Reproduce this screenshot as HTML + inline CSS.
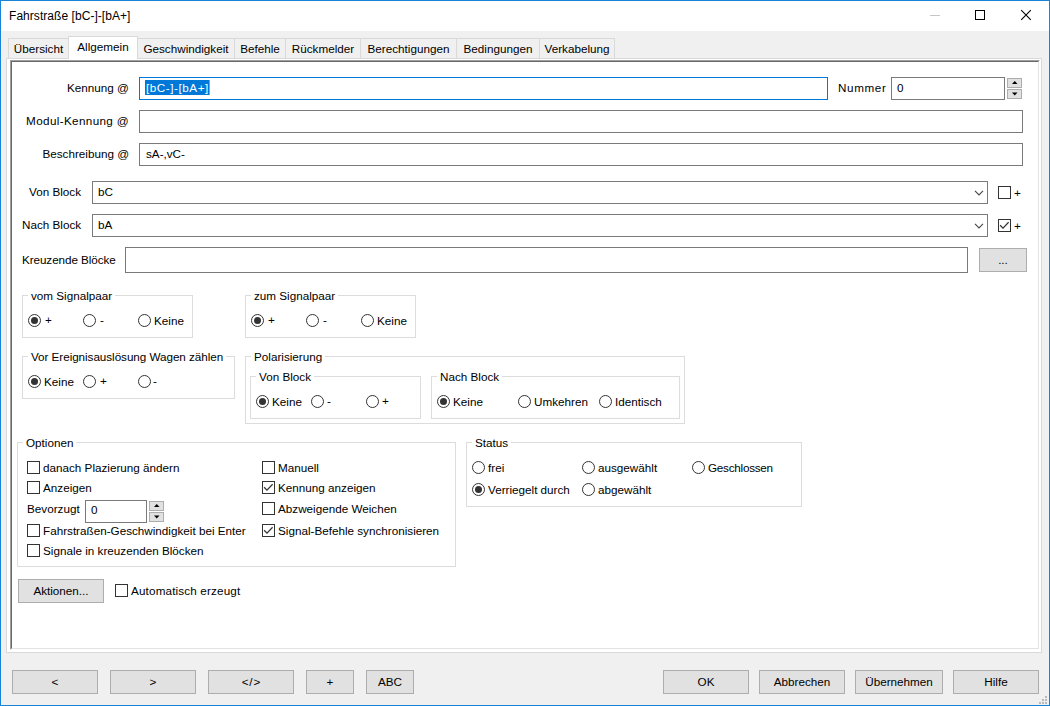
<!DOCTYPE html>
<html><head><meta charset="utf-8">
<style>
*{margin:0;padding:0;box-sizing:border-box}
html,body{width:1050px;height:706px;overflow:hidden;background:#f0f0f0}
body{position:relative;font-family:"Liberation Sans",sans-serif;font-size:11.7px;color:#000}
.a{position:absolute}
.t{position:absolute;line-height:14px;white-space:pre;height:14px}
.win{position:absolute;left:0;top:0;width:1050px;height:706px;border:1px solid #1883d7}
.title{position:absolute;left:1px;top:1px;width:1048px;height:30px;background:#fff}
.tab{position:absolute;top:38px;height:21px;border:1px solid #d9d9d9;border-bottom:none;background:#f0f0f0}
.tab.sel{top:36px;height:23px;background:#fff;z-index:2}
.page{position:absolute;left:6px;top:58px;width:1036px;height:595px;border:1px solid #d9d9d9;background:#fff}
.sunk{position:absolute;left:10px;top:60px;width:1030px;height:590px;border-top:1px solid #a0a0a0;border-left:1px solid #a0a0a0;border-right:1px solid #fff;border-bottom:1px solid #fff}
.sunk2{position:absolute;left:0;top:0;right:0;bottom:0;border-top:1px solid #696969;border-left:1px solid #696969;border-right:1px solid #e3e3e3;border-bottom:1px solid #e3e3e3}
.ed{position:absolute;border:1px solid #7a7a7a;background:#fff}
.btn{position:absolute;border:1px solid #adadad;background:#e1e1e1}
.grp{position:absolute;border:1px solid #dcdcdc}
.gl{position:absolute;background:#fff;line-height:14px;white-space:pre;padding:0 3px 0 3px}
.cb{position:absolute;width:13px;height:13px;border:1px solid #333;background:#fff}
.rb{position:absolute;width:13px;height:13px;border:1px solid #333;border-radius:50%;background:#fff}
.rb.on::after{content:"";position:absolute;left:2px;top:2px;width:7px;height:7px;border-radius:50%;background:#333}
.spin{position:absolute;border:1px solid #adadad;background:#e1e1e1}
</style></head><body>
<div class="win"></div><div class="title"></div>
<div class="t" style="left:9px;top:9px;font-size:12px;letter-spacing:0.05px">Fahrstraße [bC-]-[bA+]</div>
<div class="a" style="left:930px;top:15px;width:10px;height:1px;background:#c6c6c6"></div>
<div class="a" style="left:975px;top:10px;width:10px;height:10px;border:1px solid #000"></div>
<svg class="a" style="left:1020px;top:9px" width="12" height="12" viewBox="0 0 12 12"><path d="M1.2 1.2L10.8 10.8M10.8 1.2L1.2 10.8" stroke="#000" stroke-width="1.1" fill="none"/></svg>
<div class="tab" style="left:8px;width:61px"><div class="t" style="left:0;right:0;top:3px;text-align:center">Übersicht</div></div>
<div class="tab sel" style="left:68px;width:70px"><div class="t" style="left:0;right:0;top:3px;text-align:center">Allgemein</div></div>
<div class="tab" style="left:137px;width:98px"><div class="t" style="left:0;right:0;top:3px;text-align:center">Geschwindigkeit</div></div>
<div class="tab" style="left:234px;width:52px"><div class="t" style="left:0;right:0;top:3px;text-align:center">Befehle</div></div>
<div class="tab" style="left:285px;width:76px"><div class="t" style="left:0;right:0;top:3px;text-align:center">Rückmelder</div></div>
<div class="tab" style="left:360px;width:97px"><div class="t" style="left:0;right:0;top:3px;text-align:center">Berechtigungen</div></div>
<div class="tab" style="left:456px;width:84px"><div class="t" style="left:0;right:0;top:3px;text-align:center">Bedingungen</div></div>
<div class="tab" style="left:539px;width:76px"><div class="t" style="left:0;right:0;top:3px;text-align:center">Verkabelung</div></div>
<div class="page"></div><div class="sunk"><div class="sunk2"></div></div>
<div class="t" style="right:921px;top:81px;">Kennung @</div>
<div class="ed" style="left:139px;top:77px;width:689px;height:23px;border-color:#0078d7"></div>
<div class="a" style="left:145px;top:80px;width:64px;height:15px;background:#0078d7"></div>
<div class="t" style="left:146px;top:81px;color:#fff;letter-spacing:0.55px">[bC-]-[bA+]</div>
<div class="a" style="left:209px;top:80px;width:1px;height:15px;background:#ff8728"></div>
<div class="t" style="left:838px;top:81px;letter-spacing:0.6px">Nummer</div>
<div class="ed" style="left:891px;top:77px;width:114px;height:23px;"></div>
<div class="t" style="left:897px;top:81px;">0</div>
<div class="spin" style="left:1007px;top:78px;width:15px;height:10px"><svg class="a" style="left:4px;top:2px" width="6" height="4"><path d="M0 3.1L2.75 0.1L5.5 3.1Z" fill="#000"/></svg></div>
<div class="spin" style="left:1007px;top:89px;width:15px;height:10px"><svg class="a" style="left:4px;top:2px" width="6" height="4"><path d="M0 0.5L2.75 3.5L5.5 0.5Z" fill="#000"/></svg></div>
<div class="t" style="right:921px;top:114px;letter-spacing:0.35px">Modul-Kennung @</div>
<div class="ed" style="left:139px;top:110px;width:884px;height:23px;"></div>
<div class="t" style="right:921px;top:147px;">Beschreibung @</div>
<div class="ed" style="left:139px;top:143px;width:884px;height:23px;"></div>
<div class="t" style="left:146px;top:147px;">sA-,vC-</div>
<div class="t" style="left:29px;top:185px;">Von Block</div>
<div class="ed" style="left:92px;top:181px;width:896px;height:23px;"></div>
<div class="t" style="left:98px;top:185px;">bC</div>
<div class="t" style="left:22px;top:218px;">Nach Block</div>
<div class="ed" style="left:92px;top:214px;width:896px;height:23px;"></div>
<div class="t" style="left:98px;top:218px;">bA</div>
<svg class="a" style="left:974px;top:190px" width="10" height="6" viewBox="0 0 10 6"><path d="M1 0.9L5 4.9L9 0.9" stroke="#444" stroke-width="1.1" fill="none"/></svg>
<svg class="a" style="left:974px;top:223px" width="10" height="6" viewBox="0 0 10 6"><path d="M1 0.9L5 4.9L9 0.9" stroke="#444" stroke-width="1.1" fill="none"/></svg>
<div class="cb" style="left:998px;top:186px"></div>
<div class="t" style="left:1014px;top:186px;">+</div>
<div class="cb" style="left:998px;top:219px"><svg class="a" style="left:0;top:0" width="11" height="11" viewBox="0 0 11 11"><path d="M1.1 5.2L4 8.1L9.6 2.3" stroke="#333" stroke-width="1.25" fill="none"/></svg></div>
<div class="t" style="left:1014px;top:219px;">+</div>
<div class="t" style="left:22px;top:253px;letter-spacing:-0.08px">Kreuzende Blöcke</div>
<div class="ed" style="left:125px;top:247px;width:843px;height:26px;"></div>
<div class="btn" style="left:979px;top:248px;width:48px;height:24px;"></div>
<div class="t" style="left:979px;width:48px;text-align:center;top:253px;">...</div>
<div class="grp" style="left:22px;top:295px;width:171px;height:43px;"></div>
<div class="gl" style="left:28px;top:289px">vom Signalpaar</div>
<div class="rb on" style="left:28px;top:314px"></div>
<div class="t" style="left:45px;top:313px;">+</div>
<div class="rb" style="left:83px;top:314px"></div>
<div class="t" style="left:100px;top:313px;">-</div>
<div class="rb" style="left:138px;top:314px"></div>
<div class="t" style="left:154px;top:314px;">Keine</div>
<div class="grp" style="left:245px;top:295px;width:171px;height:43px;"></div>
<div class="gl" style="left:251px;top:289px">zum Signalpaar</div>
<div class="rb on" style="left:251px;top:314px"></div>
<div class="t" style="left:268px;top:313px;">+</div>
<div class="rb" style="left:306px;top:314px"></div>
<div class="t" style="left:323px;top:313px;">-</div>
<div class="rb" style="left:361px;top:314px"></div>
<div class="t" style="left:377px;top:314px;">Keine</div>
<div class="grp" style="left:22px;top:356px;width:213px;height:43px;"></div>
<div class="gl" style="left:28px;top:350px;letter-spacing:-0.05px">Vor Ereignisauslösung Wagen zählen</div>
<div class="rb on" style="left:28px;top:375px"></div>
<div class="t" style="left:44px;top:375px;">Keine</div>
<div class="rb" style="left:83px;top:375px"></div>
<div class="t" style="left:100px;top:374px;">+</div>
<div class="rb" style="left:138px;top:375px"></div>
<div class="t" style="left:153px;top:374px;">-</div>
<div class="grp" style="left:245px;top:356px;width:440px;height:68px;"></div>
<div class="gl" style="left:251px;top:350px">Polarisierung</div>
<div class="grp" style="left:250px;top:376px;width:171px;height:43px;"></div>
<div class="gl" style="left:256px;top:370px">Von Block</div>
<div class="rb on" style="left:256px;top:395px"></div>
<div class="t" style="left:272px;top:395px;">Keine</div>
<div class="rb" style="left:311px;top:395px"></div>
<div class="t" style="left:327px;top:394px;">-</div>
<div class="rb" style="left:366px;top:395px"></div>
<div class="t" style="left:382px;top:394px;">+</div>
<div class="grp" style="left:431px;top:376px;width:249px;height:43px;"></div>
<div class="gl" style="left:437px;top:370px">Nach Block</div>
<div class="rb on" style="left:437px;top:395px"></div>
<div class="t" style="left:453px;top:395px;">Keine</div>
<div class="rb" style="left:518px;top:395px"></div>
<div class="t" style="left:534px;top:395px;">Umkehren</div>
<div class="rb" style="left:599px;top:395px"></div>
<div class="t" style="left:615px;top:395px;">Identisch</div>
<div class="grp" style="left:17px;top:442px;width:439px;height:125px;"></div>
<div class="gl" style="left:23px;top:436px">Optionen</div>
<div class="cb" style="left:27px;top:461px"></div>
<div class="t" style="left:43px;top:461px;">danach Plazierung ändern</div>
<div class="cb" style="left:27px;top:481px"></div>
<div class="t" style="left:43px;top:481px;">Anzeigen</div>
<div class="t" style="left:27px;top:502px;">Bevorzugt</div>
<div class="ed" style="left:85px;top:500px;width:62px;height:23px;"></div>
<div class="t" style="left:91px;top:503px;">0</div>
<div class="spin" style="left:149px;top:501px;width:15px;height:10px"><svg class="a" style="left:4px;top:2px" width="6" height="4"><path d="M0 3.1L2.75 0.1L5.5 3.1Z" fill="#000"/></svg></div>
<div class="spin" style="left:149px;top:512px;width:15px;height:10px"><svg class="a" style="left:4px;top:2px" width="6" height="4"><path d="M0 0.5L2.75 3.5L5.5 0.5Z" fill="#000"/></svg></div>
<div class="cb" style="left:27px;top:524px"></div>
<div class="t" style="left:43px;top:524px;">Fahrstraßen-Geschwindigkeit bei Enter</div>
<div class="cb" style="left:27px;top:544px"></div>
<div class="t" style="left:43px;top:544px;">Signale in kreuzenden Blöcken</div>
<div class="cb" style="left:262px;top:461px"></div>
<div class="t" style="left:278px;top:461px;">Manuell</div>
<div class="cb" style="left:262px;top:481px"><svg class="a" style="left:0;top:0" width="11" height="11" viewBox="0 0 11 11"><path d="M1.1 5.2L4 8.1L9.6 2.3" stroke="#333" stroke-width="1.25" fill="none"/></svg></div>
<div class="t" style="left:278px;top:481px;">Kennung anzeigen</div>
<div class="cb" style="left:262px;top:502px"></div>
<div class="t" style="left:278px;top:502px;">Abzweigende Weichen</div>
<div class="cb" style="left:262px;top:524px"><svg class="a" style="left:0;top:0" width="11" height="11" viewBox="0 0 11 11"><path d="M1.1 5.2L4 8.1L9.6 2.3" stroke="#333" stroke-width="1.25" fill="none"/></svg></div>
<div class="t" style="left:278px;top:524px;">Signal-Befehle synchronisieren</div>
<div class="grp" style="left:466px;top:442px;width:336px;height:65px;"></div>
<div class="gl" style="left:472px;top:436px">Status</div>
<div class="rb" style="left:472px;top:461px"></div>
<div class="t" style="left:488px;top:461px;">frei</div>
<div class="rb" style="left:582px;top:461px"></div>
<div class="t" style="left:598px;top:461px;">ausgewählt</div>
<div class="rb" style="left:692px;top:461px"></div>
<div class="t" style="left:708px;top:461px;letter-spacing:-0.25px">Geschlossen</div>
<div class="rb on" style="left:472px;top:483px"></div>
<div class="t" style="left:488px;top:483px;">Verriegelt durch</div>
<div class="rb" style="left:582px;top:483px"></div>
<div class="t" style="left:598px;top:483px;">abgewählt</div>
<div class="btn" style="left:18px;top:579px;width:86px;height:24px;"></div>
<div class="t" style="left:18px;width:86px;text-align:center;top:584px;">Aktionen...</div>
<div class="cb" style="left:115px;top:584px"></div>
<div class="t" style="left:131px;top:584px;letter-spacing:0.15px">Automatisch erzeugt</div>
<div class="btn" style="left:12px;top:670px;width:86px;height:24px;"></div>
<div class="t" style="left:12px;width:86px;text-align:center;top:675px;">&lt;</div>
<div class="btn" style="left:110px;top:670px;width:86px;height:24px;"></div>
<div class="t" style="left:110px;width:86px;text-align:center;top:675px;">&gt;</div>
<div class="btn" style="left:306px;top:670px;width:48px;height:24px;"></div>
<div class="t" style="left:306px;width:48px;text-align:center;top:675px;">+</div>
<div class="btn" style="left:366px;top:670px;width:48px;height:24px;"></div>
<div class="t" style="left:366px;width:48px;text-align:center;top:675px;">ABC</div>
<div class="btn" style="left:663px;top:670px;width:86px;height:24px;"></div>
<div class="t" style="left:663px;width:86px;text-align:center;top:675px;">OK</div>
<div class="btn" style="left:759px;top:670px;width:86px;height:24px;"></div>
<div class="t" style="left:759px;width:86px;text-align:center;top:675px;">Abbrechen</div>
<div class="btn" style="left:855px;top:670px;width:88px;height:24px;"></div>
<div class="t" style="left:855px;width:88px;text-align:center;top:675px;">Übernehmen</div>
<div class="btn" style="left:953px;top:670px;width:86px;height:24px;"></div>
<div class="t" style="left:953px;width:86px;text-align:center;top:675px;">Hilfe</div>
<div class="btn" style="left:208px;top:670px;width:86px;height:24px;"></div>
<div class="t" style="left:208px;width:86px;text-align:center;top:675px;letter-spacing:0.8px;text-indent:0.8px">&lt;/&gt;</div>
<div class="a" style="left:1045px;top:696px;width:2px;height:2px;background:#b9b9b9"></div>
<div class="a" style="left:1042px;top:699px;width:2px;height:2px;background:#b9b9b9"></div>
<div class="a" style="left:1045px;top:699px;width:2px;height:2px;background:#b9b9b9"></div>
<div class="a" style="left:1039px;top:702px;width:2px;height:2px;background:#b9b9b9"></div>
<div class="a" style="left:1042px;top:702px;width:2px;height:2px;background:#b9b9b9"></div>
<div class="a" style="left:1045px;top:702px;width:2px;height:2px;background:#b9b9b9"></div>
</body></html>
